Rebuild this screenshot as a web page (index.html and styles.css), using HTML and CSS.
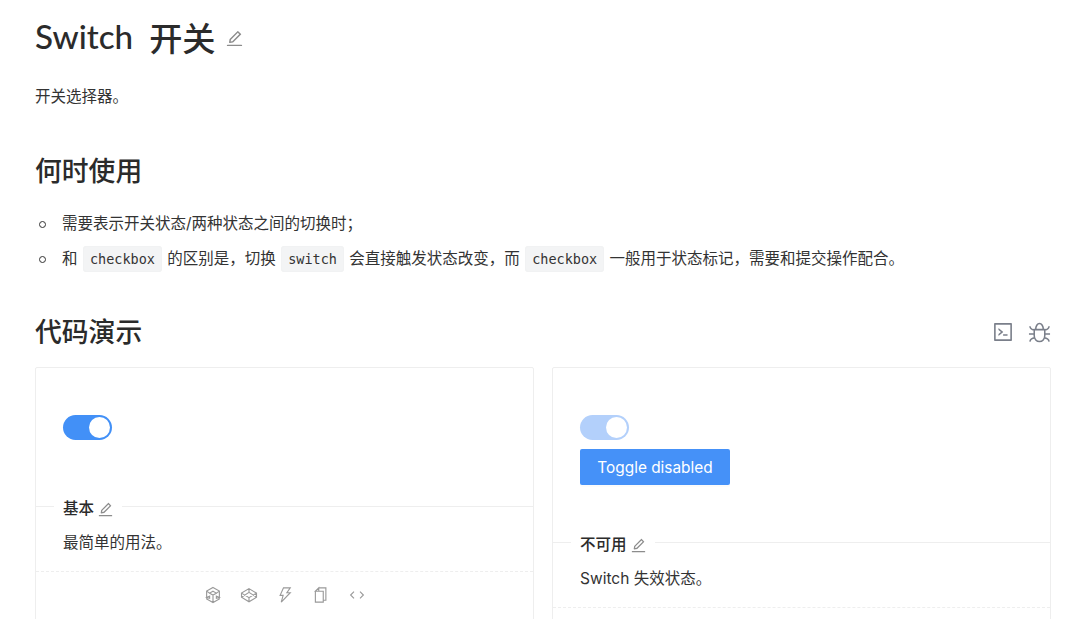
FILE: index.html
```html
<!DOCTYPE html>
<html lang="zh-CN">
<head>
    <meta charset="UTF-8">
    <meta name="viewport" content="width=device-width, initial-scale=1.0">
    <title>Switch 开关</title>
    <link rel="stylesheet" href="styles.css">
</head>
<body>
    <div class="container">
        <h1>Switch <span class="cjk-gap">开关</span>
            <svg class="edit edit-large" viewBox="64 64 896 896"><path d="M257.7 752c2 0 4-.2 6-.5L431.9 722c2-.4 3.9-1.3 5.3-2.8l423.9-423.9a9.96 9.96 0 0 0 0-14.1L694.9 114.9c-1.9-1.9-4.4-2.9-7.1-2.9s-5.2 1-7.1 2.9L256.8 538.8c-1.5 1.5-2.4 3.3-2.8 5.3l-29.5 168.2a33.5 33.5 0 0 0 9.4 29.8c6.6 6.4 14.9 9.9 23.8 9.9zm67.4-174.4L687.8 215l73.3 73.3-362.7 362.6-88.9 15.7 15.6-89zM880 836H144c-17.7 0-32 14.3-32 32v36c0 4.4 3.6 8 8 8h784c4.4 0 8-3.6 8-8v-36c0-17.7-14.3-32-32-32z"/></svg>
        </h1>
        <p class="intro">开关选择器。</p>

        <h2 class="when">何时使用</h2>
        <ul class="usage">
            <li>需要表示开关状态/两种状态之间的切换时；</li>
            <li>和 <code>checkbox</code> 的区别是，切换 <code>switch</code> 会直接触发状态改变，而 <code>checkbox</code> 一般用于状态标记，需要和提交操作配合。</li>
        </ul>

        <div class="demo-head">
            <h2>代码演示</h2>
            <div class="demo-tools">
                <svg class="tool" viewBox="64 64 896 896"><path d="M516 673c0 4.4 3.4 8 7.5 8h185c4.1 0 7.5-3.6 7.5-8v-48c0-4.4-3.4-8-7.5-8h-185c-4.1 0-7.5 3.6-7.5 8v48zm-194.9 6.1l192-161c3.8-3.2 3.8-9.1 0-12.3l-192-160.9A7.95 7.95 0 0 0 308 351v62.7c0 2.4 1 4.6 2.9 6.1L420.7 512l-109.8 92.2a8.1 8.1 0 0 0-2.9 6.1V673c0 6.8 7.9 10.5 13.1 6.1zM880 112H144c-17.7 0-32 14.3-32 32v736c0 17.7 14.3 32 32 32h736c17.7 0 32-14.3 32-32V144c0-17.7-14.3-32-32-32zm-40 728H184V184h656v656z"/></svg>
                <svg class="tool tool-line" viewBox="0 0 24 24"><path d="M8 9c0-3.500 1.800-6.500 4-6.500s4 3 4 6.500M6.500 9h11v6.500c0 3.500-2.500 6-5.500 6s-5.500-2.500-5.500-6zM2 5.500c.3 2.500 1.800 3.500 4.500 4M22 5.500c-.3 2.500-1.800 3.500-4.500 4M1 13.500h5.500M23 13.500h-5.500M2 21.500c.3-2.300 2-3.500 5.200-4M22 21.500c-.3-2.300-2-3.500-5.200-4"/></svg>
            </div>
        </div>

        <div class="demo-grid">
            <section class="card">
                <div class="card-demo">
                    <span class="switch"><span class="knob"></span></span>
                </div>
                <div class="card-meta">
                    <div class="meta-title">基本
                        <svg class="edit" viewBox="64 64 896 896"><path d="M257.7 752c2 0 4-.2 6-.5L431.9 722c2-.4 3.9-1.3 5.3-2.8l423.9-423.9a9.96 9.96 0 0 0 0-14.1L694.9 114.9c-1.9-1.9-4.4-2.9-7.1-2.9s-5.2 1-7.1 2.9L256.8 538.8c-1.5 1.5-2.4 3.3-2.8 5.3l-29.5 168.2a33.5 33.5 0 0 0 9.4 29.8c6.6 6.4 14.9 9.9 23.8 9.9zm67.4-174.4L687.8 215l73.3 73.3-362.7 362.6-88.9 15.7 15.6-89zM880 836H144c-17.7 0-32 14.3-32 32v36c0 4.4 3.6 8 8 8h784c4.4 0 8-3.6 8-8v-36c0-17.7-14.3-32-32-32z"/></svg>
                    </div>
                    <p class="meta-desc">最简单的用法。</p>
                </div>
                <div class="card-actions">
                    <svg class="action" viewBox="0 0 24 24"><path d="M12 2l8.500 4.800v10.400L12 22l-8.500-4.800V6.800zM12 7l4.500 2.500L12 12 7.500 9.500zM12 12v10M3.500 6.800l4 2.700M20.500 6.800l-4 2.700M3.500 15.500l4-2v3zM20.500 15.500l-4-2v3z"/></svg>
                    <svg class="action" viewBox="0 0 24 24"><path d="M12 3.500l10 6v5.500l-10 6-10-6V9.500zM12 3.500v5M12 15.500v5.500M2 9.500l10 6 10-6M2 15l10-6.500L22 15"/></svg>
                    <svg class="action" viewBox="0 0 24 24"><path d="M10 2.500h9l-4.500 6.500H19L7 21.500l2.500-9H5.500z"/></svg>
                    <svg class="action" viewBox="0 0 24 24"><path d="M9 2.500h9.500v16.500H15M4.500 7L9 2.500V7zM4.500 7v14.500H15V7H9"/></svg>
                    <svg class="action" viewBox="0 0 24 24"><path d="M8 7.500L3.500 12 8 16.500M16 7.500l4.500 4.500-4.500 4.500"/></svg>
                </div>
            </section>

            <section class="card">
                <div class="card-demo">
                    <span class="switch switch-disabled"><span class="knob"></span></span>
                    <button class="toggle-btn">Toggle disabled</button>
                </div>
                <div class="card-meta">
                    <div class="meta-title">不可用
                        <svg class="edit" viewBox="64 64 896 896"><path d="M257.7 752c2 0 4-.2 6-.5L431.9 722c2-.4 3.9-1.3 5.3-2.8l423.9-423.9a9.96 9.96 0 0 0 0-14.1L694.9 114.9c-1.9-1.9-4.4-2.9-7.1-2.9s-5.2 1-7.1 2.9L256.8 538.8c-1.5 1.5-2.4 3.3-2.8 5.3l-29.5 168.2a33.5 33.5 0 0 0 9.4 29.8c6.6 6.4 14.9 9.9 23.8 9.9zm67.4-174.4L687.8 215l73.3 73.3-362.7 362.6-88.9 15.7 15.6-89zM880 836H144c-17.7 0-32 14.3-32 32v36c0 4.4 3.6 8 8 8h784c4.4 0 8-3.6 8-8v-36c0-17.7-14.3-32-32-32z"/></svg>
                    </div>
                    <p class="meta-desc">Switch 失效状态。</p>
                </div>
                <div class="card-actions"></div>
            </section>
        </div>
    </div>
</body>
</html>
```

FILE: styles.css
```css
html, body {
    height: 100vh;
    overflow: hidden;
}

body {
    margin: 0;
    padding: 0;
    background-color: #fff;
    color: #333;
    font-family: Inter, "Noto Sans CJK SC", sans-serif;
    font-size: 15.5px;
}

.container {
    padding: 12px 29px 0 35px;
}

h1 {
    margin: 0;
    display: flex;
    align-items: center;
    height: 48px;
    font-family: Lato, "Noto Sans CJK SC", sans-serif;
    font-size: 33.2px;
    font-weight: 500;
    color: #2b2b2b;
}

.cjk-gap {
    margin-left: 16px;
}

.edit {
    width: 15px;
    height: 15px;
    fill: #8c8c8c;
    margin-left: 4px;
}

.edit-large {
    width: 17px;
    height: 17px;
    margin-left: 10px;
    margin-top: 5px;
}

.intro {
    margin: 26px 0 0;
    line-height: 22px;
}

h2 {
    margin: 0;
    font-size: 26.8px;
    font-weight: 500;
    line-height: 38px;
    color: #2b2b2b;
}

.when {
    margin-top: 44px;
}

.usage {
    list-style: none;
    margin: 22px 0 0;
    padding: 0 0 0 27px;
}

.usage li {
    position: relative;
    height: 35px;
    line-height: 24px;
    white-space: nowrap;
}

.usage li::before {
    content: "";
    position: absolute;
    left: -23px;
    top: 9px;
    width: 5px;
    height: 5px;
    border: 1px solid #333;
    border-radius: 50%;
}

code {
    font-family: "DejaVu Sans Mono", monospace;
    font-size: 13.5px;
    padding: 4px 6px;
    margin: 0 1px;
    background: #f3f4f5;
    border: 1px solid #f1f2f3;
    border-radius: 3px;
}

.demo-head {
    display: flex;
    justify-content: space-between;
    align-items: center;
    margin-top: 31px;
    height: 38px;
}

.demo-tools {
    display: flex;
    align-items: center;
    gap: 15px;
}

.tool {
    width: 20px;
    height: 20px;
    fill: #7a7f8a;
}

.tool-line {
    width: 23px;
    height: 23px;
    fill: none;
    stroke: #7a7f8a;
    stroke-width: 1.6;
}

.demo-grid {
    display: grid;
    grid-template-columns: 1fr 1fr;
    gap: 18px;
    margin-top: 16px;
}

.card {
    border: 1px solid #eeeeee;
    border-radius: 2px;
    height: 400px;
}

.card-demo {
    display: flex;
    flex-direction: column;
    align-items: flex-start;
    padding: 47px 27px 57px;
}

.switch {
    display: flex;
    justify-content: flex-end;
    align-items: center;
    box-sizing: border-box;
    width: 49px;
    height: 25px;
    margin-bottom: 9px;
    padding: 0 2px;
    border-radius: 13px;
    background: #4290f7;
}

.knob {
    width: 21px;
    height: 21px;
    border-radius: 50%;
    background: #fff;
}

.switch-disabled {
    background: #b3d0fb;
}

.toggle-btn {
    width: 150px;
    height: 36px;
    border: 0;
    border-radius: 2px;
    background: #4591f8;
    box-shadow: 0 2px 0 rgba(0, 0, 0, 0.015);
    color: #fff;
    font-family: Inter, sans-serif;
    font-size: 15.4px;
    padding: 0;
}

.card-meta {
    position: relative;
    padding: 0 27px;
    border-top: 1px solid #eeeeee;
}

.meta-title {
    display: inline-flex;
    align-items: center;
    position: absolute;
    top: -9px;
    left: 18px;
    padding: 0 9px;
    background: #fff;
    font-weight: 500;
    line-height: 22px;
    color: #2b2b2b;
}

.meta-desc {
    margin: 0;
    padding: 25px 0 17px;
    line-height: 22px;
}

.card-actions {
    display: flex;
    justify-content: center;
    gap: 18px;
    padding-top: 14px;
    border-top: 1px dashed #eeeeee;
}

.action {
    width: 18px;
    height: 18px;
    fill: none;
    stroke: #999;
    stroke-width: 1.5;
}
```
